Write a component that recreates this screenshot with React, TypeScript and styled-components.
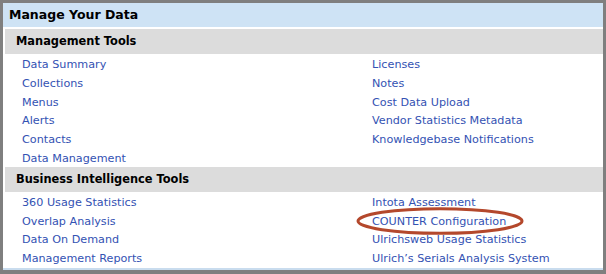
import * as React from 'react';
import styled, { createGlobalStyle } from 'styled-components';

interface Section {
    title: string;
    left: string[];
    right: string[];
}

const sections: Section[] = [
    {
        title: 'Management Tools',
        left: ['Data Summary', 'Collections', 'Menus', 'Alerts', 'Contacts', 'Data Management'],
        right: ['Licenses', 'Notes', 'Cost Data Upload', 'Vendor Statistics Metadata', 'Knowledgebase Notifications'],
    },
    {
        title: 'Business Intelligence Tools',
        left: ['360 Usage Statistics', 'Overlap Analysis', 'Data On Demand', 'Management Reports'],
        right: ['Intota Assessment', 'COUNTER Configuration', 'Ulrichsweb Usage Statistics', 'Ulrich\u2019s Serials Analysis System'],
    },
];

const circled = 'COUNTER Configuration';

export default function App() {
    return (
        <>
            <GlobalStyle />
            <Frame>
                <Panel>
                    <Header>Manage Your Data</Header>
                    <Body>
                        {sections.map(s => (
                            <React.Fragment key={s.title}>
                                <SectionBar>{s.title}</SectionBar>
                                <Columns>
                                    <Column>
                                        {s.left.map(l => <LinkRow key={l}><Link href="#">{l}</Link></LinkRow>)}
                                    </Column>
                                    <Column>
                                        {s.right.map(l => (
                                            <LinkRow key={l}>
                                                <Link href="#">{l}</Link>
                                                {l === circled && (
                                                    <Ring width="170" height="28" viewBox="0 0 170 28">
                                                        <ellipse cx="84" cy="14" rx="82" ry="12.3" fill="none" stroke="#b4482c" strokeWidth="3" />
                                                    </Ring>
                                                )}
                                            </LinkRow>
                                        ))}
                                    </Column>
                                </Columns>
                            </React.Fragment>
                        ))}
                    </Body>
                </Panel>
            </Frame>
        </>
    );
}

const GlobalStyle = createGlobalStyle`
    html, body {
        margin: 0;
        padding: 0;
        background: #7f7f7f;
    }
`;

const Frame = styled('div')`
    width: 606px;
    height: 274px;
    padding: 3px;
    box-sizing: border-box;
    background: #7f7f7f;
    font-family: "DejaVu Sans", Verdana, sans-serif;
`;

const Panel = styled('div')`
    width: 600px;
    height: 267px;
    background: #ffffff;
    border-bottom: 2px solid #c9dcee;
    box-sizing: border-box;
    overflow: hidden;
`;

const Header = styled('div')`
    height: 24px;
    line-height: 24px;
    background: #cee3f5;
    padding-left: 6px;
    font-size: 12.5px;
    font-weight: bold;
    color: #000;
    margin-bottom: 2px;
`;

const Body = styled('div')`
    padding-left: 2px;
`;

const SectionBar = styled('div')`
    height: 25px;
    line-height: 25px;
    background: #dcdcdc;
    padding-left: 11px;
    font-size: 11.4px;
    font-weight: bold;
    color: #000;
`;

const Columns = styled('div')`
    display: grid;
    grid-template-columns: 350px 1fr;
    padding-left: 17px;
`;

const Column = styled('div')`
    display: flex;
    flex-direction: column;
`;

const LinkRow = styled('div')`
    position: relative;
    height: 18.8px;
    line-height: 18.8px;
`;

const Link = styled('a')`
    font-size: 11.2px;
    color: #3352b3;
    text-decoration: none;
    white-space: nowrap;
`;

const Ring = styled('svg')`
    position: absolute;
    left: -16px;
    top: -4px;
    pointer-events: none;
`;
